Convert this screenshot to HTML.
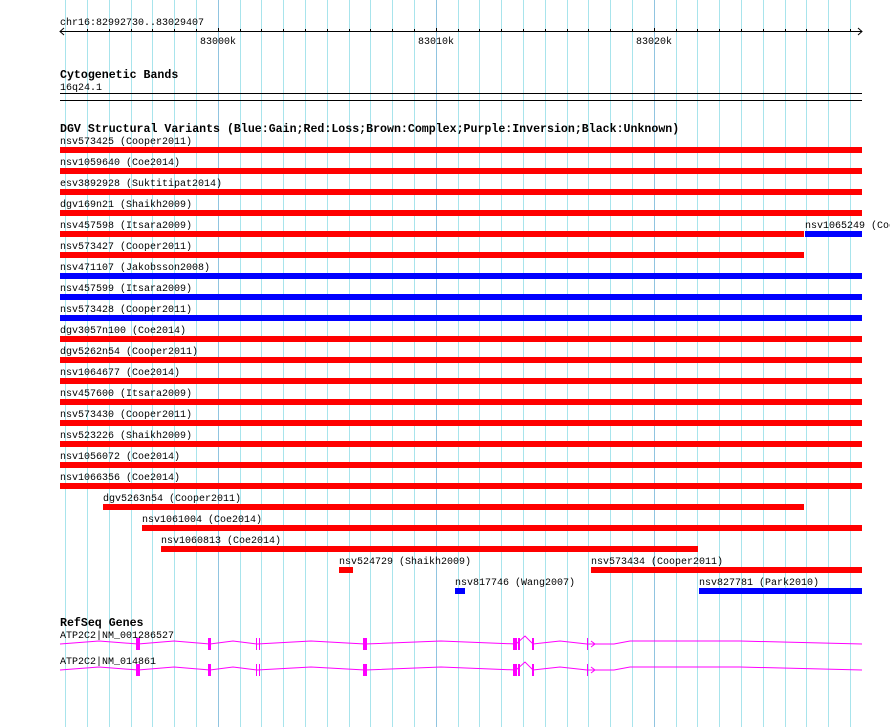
<!DOCTYPE html>
<html><head><meta charset="utf-8"><style>
html,body{margin:0;padding:0;background:#fff;}
svg{display:block;}
text{font-family:"Liberation Mono",monospace;font-size:10px;fill:#000;}
.b{font-weight:bold;font-size:11.6px;}
</style></head><body>
<svg width="890" height="727" xmlns="http://www.w3.org/2000/svg">
<path stroke="#a8e4ec" stroke-width="1" fill="none" d="M65.5 0v727M87.5 0v727M109.5 0v727M131.5 0v727M152.5 0v727M174.5 0v727M196.5 0v727M240.5 0v727M261.5 0v727M283.5 0v727M305.5 0v727M327.5 0v727M349.5 0v727M370.5 0v727M392.5 0v727M414.5 0v727M458.5 0v727M479.5 0v727M501.5 0v727M523.5 0v727M545.5 0v727M567.5 0v727M588.5 0v727M610.5 0v727M632.5 0v727M676.5 0v727M697.5 0v727M719.5 0v727M741.5 0v727M763.5 0v727M785.5 0v727M806.5 0v727M828.5 0v727M850.5 0v727"/>
<path stroke="#90c4e0" stroke-width="1" d="M218.5 0v727M436.5 0v727M654.5 0v727"/>
<text x="60" y="25">chr16:82992730..83029407</text>
<g stroke="#000" fill="none"><line x1="60" y1="31.5" x2="862" y2="31.5"/>
<polyline points="64,28 60,31.5 64,35"/><polyline points="858,28 862,31.5 858,35"/>
<path d="M87.5 29v3M109.5 29v3M131.5 29v3M152.5 29v3M174.5 29v3M196.5 29v3M218.5 28v4M240.5 29v3M261.5 29v3M283.5 29v3M305.5 29v3M327.5 29v3M349.5 29v3M370.5 29v3M392.5 29v3M414.5 29v3M436.5 28v4M458.5 29v3M479.5 29v3M501.5 29v3M523.5 29v3M545.5 29v3M567.5 29v3M588.5 29v3M610.5 29v3M632.5 29v3M654.5 28v4M676.5 29v3M697.5 29v3M719.5 29v3M741.5 29v3M763.5 29v3M785.5 29v3M806.5 29v3M828.5 29v3M850.5 29v3"/>
</g>
<text x="200" y="44">83000k</text><text x="418" y="44">83010k</text><text x="636" y="44">83020k</text>
<text class="b" x="60" y="78">Cytogenetic Bands</text>
<text x="60" y="90">16q24.1</text>
<rect x="60" y="93" width="802" height="1" fill="#000"/><rect x="60" y="100" width="802" height="1" fill="#000"/>
<text class="b" x="60" y="132">DGV Structural Variants (Blue:Gain;Red:Loss;Brown:Complex;Purple:Inversion;Black:Unknown)</text>
<g>
<text x="60" y="144">nsv573425 (Cooper2011)</text><rect x="60" y="147" width="802" height="6" fill="#f00"/>
<text x="60" y="165">nsv1059640 (Coe2014)</text><rect x="60" y="168" width="802" height="6" fill="#f00"/>
<text x="60" y="186">esv3892928 (Suktitipat2014)</text><rect x="60" y="189" width="802" height="6" fill="#f00"/>
<text x="60" y="207">dgv169n21 (Shaikh2009)</text><rect x="60" y="210" width="802" height="6" fill="#f00"/>
<text x="60" y="228">nsv457598 (Itsara2009)</text><rect x="60" y="231" width="744" height="6" fill="#f00"/>
<text x="805" y="228">nsv1065249 (Coe2014)</text><rect x="805" y="231" width="57" height="6" fill="#00f"/>
<text x="60" y="249">nsv573427 (Cooper2011)</text><rect x="60" y="252" width="744" height="6" fill="#f00"/>
<text x="60" y="270">nsv471107 (Jakobsson2008)</text><rect x="60" y="273" width="802" height="6" fill="#00f"/>
<text x="60" y="291">nsv457599 (Itsara2009)</text><rect x="60" y="294" width="802" height="6" fill="#00f"/>
<text x="60" y="312">nsv573428 (Cooper2011)</text><rect x="60" y="315" width="802" height="6" fill="#00f"/>
<text x="60" y="333">dgv3057n100 (Coe2014)</text><rect x="60" y="336" width="802" height="6" fill="#f00"/>
<text x="60" y="354">dgv5262n54 (Cooper2011)</text><rect x="60" y="357" width="802" height="6" fill="#f00"/>
<text x="60" y="375">nsv1064677 (Coe2014)</text><rect x="60" y="378" width="802" height="6" fill="#f00"/>
<text x="60" y="396">nsv457600 (Itsara2009)</text><rect x="60" y="399" width="802" height="6" fill="#f00"/>
<text x="60" y="417">nsv573430 (Cooper2011)</text><rect x="60" y="420" width="802" height="6" fill="#f00"/>
<text x="60" y="438">nsv523226 (Shaikh2009)</text><rect x="60" y="441" width="802" height="6" fill="#f00"/>
<text x="60" y="459">nsv1056072 (Coe2014)</text><rect x="60" y="462" width="802" height="6" fill="#f00"/>
<text x="60" y="480">nsv1066356 (Coe2014)</text><rect x="60" y="483" width="802" height="6" fill="#f00"/>
<text x="103" y="501">dgv5263n54 (Cooper2011)</text><rect x="103" y="504" width="701" height="6" fill="#f00"/>
<text x="142" y="522">nsv1061004 (Coe2014)</text><rect x="142" y="525" width="720" height="6" fill="#f00"/>
<text x="161" y="543">nsv1060813 (Coe2014)</text><rect x="161" y="546" width="537" height="6" fill="#f00"/>
<text x="339" y="564">nsv524729 (Shaikh2009)</text><rect x="339" y="567" width="14" height="6" fill="#f00"/>
<text x="591" y="564">nsv573434 (Cooper2011)</text><rect x="591" y="567" width="271" height="6" fill="#f00"/>
<text x="455" y="585">nsv817746 (Wang2007)</text><rect x="455" y="588" width="10" height="6" fill="#00f"/>
<text x="699" y="585">nsv827781 (Park2010)</text><rect x="699" y="588" width="163" height="6" fill="#00f"/>
</g>
<text class="b" x="60" y="626">RefSeq Genes</text>
<text x="60" y="638">ATP2C2|NM_001286527</text>
<text x="60" y="664">ATP2C2|NM_014861</text>
<g fill="none" stroke="#f0f" stroke-width="1">
<polyline points="60,644 99,641 138,644 174,641 210,644 233,641 257,644 311,641 365,644 441,641 516,644 525,636 533,644 560,641 587,644 591,644"/>
<polyline points="591,644 614,644 630,641 696,641 740,641 862,644"/>
<polyline points="591,641 595,644 591,647"/>
</g>
<g fill="#f0f">
<rect x="136" y="638" width="4" height="12"/><rect x="208" y="638" width="3" height="12"/><rect x="256" y="638" width="1" height="12"/><rect x="259" y="638" width="1" height="12"/><rect x="363" y="638" width="4" height="12"/><rect x="513" y="638" width="4" height="12"/><rect x="518" y="638" width="2" height="12"/><rect x="532" y="638" width="2" height="12"/><rect x="587" y="638" width="1" height="12"/>
</g>
<g transform="translate(0,26)">
<g fill="none" stroke="#f0f" stroke-width="1">
<polyline points="60,644 99,641 138,644 174,641 210,644 233,641 257,644 311,641 365,644 441,641 516,644 525,636 533,644 560,641 587,644 591,644"/>
<polyline points="591,644 614,644 630,641 696,641 740,641 862,644"/>
<polyline points="591,641 595,644 591,647"/>
</g>
<g fill="#f0f">
<rect x="136" y="638" width="4" height="12"/><rect x="208" y="638" width="3" height="12"/><rect x="256" y="638" width="1" height="12"/><rect x="259" y="638" width="1" height="12"/><rect x="363" y="638" width="4" height="12"/><rect x="513" y="638" width="4" height="12"/><rect x="518" y="638" width="2" height="12"/><rect x="532" y="638" width="2" height="12"/><rect x="587" y="638" width="1" height="12"/>
</g>
</g>
</svg>
</body></html>
